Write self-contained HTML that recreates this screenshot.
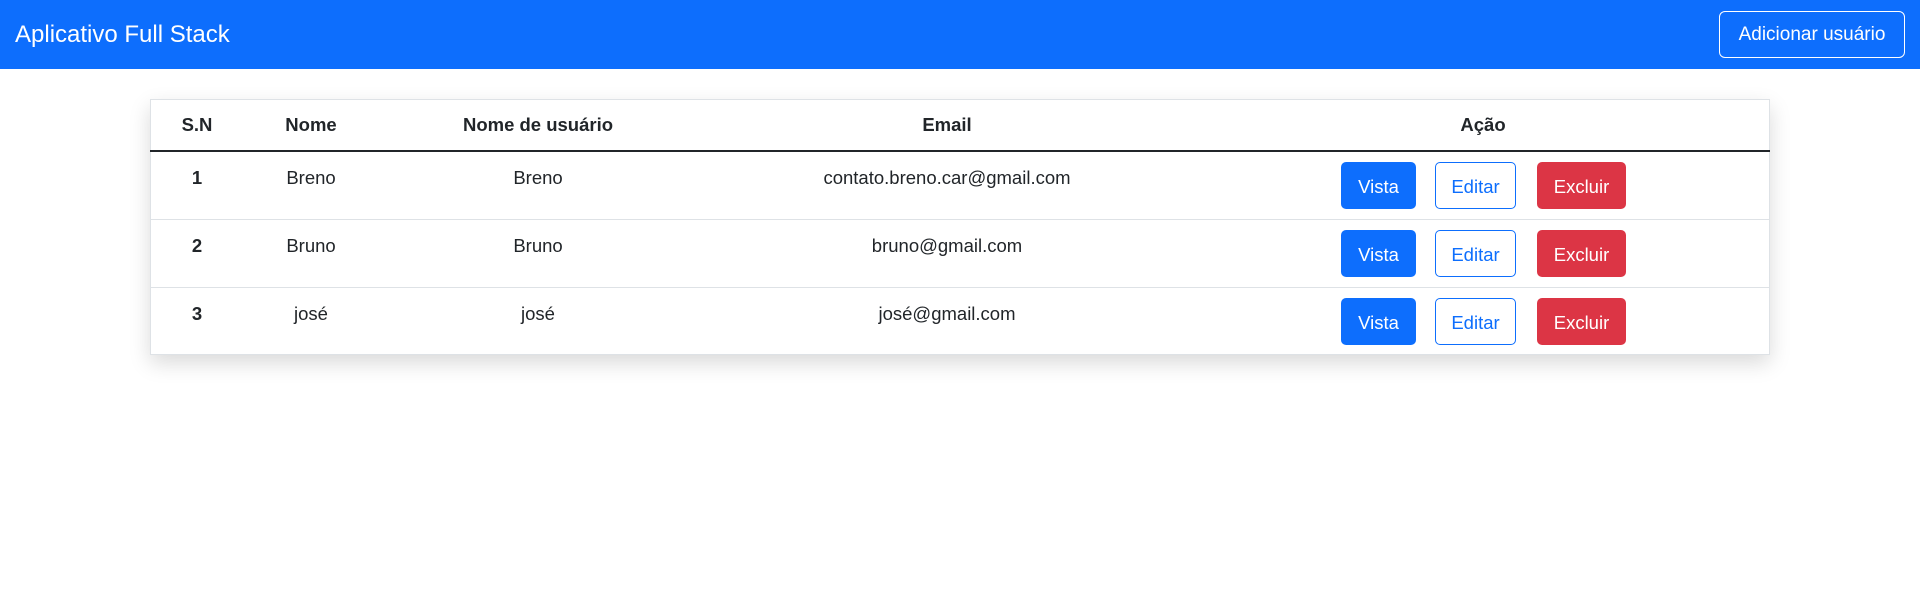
<!DOCTYPE html>
<html><head><meta charset="utf-8"><style>
*{margin:0;padding:0;box-sizing:border-box}
body{width:1920px;height:592px;background:#fff;font-family:"Liberation Sans","DejaVu Sans",sans-serif;color:#212529;position:relative;overflow:hidden}
.nav{position:absolute;left:0;top:0;width:1920px;height:69px;background:#0d6efd}
.title{position:absolute;left:15px;top:0;line-height:69px;font-size:24px;color:#fff}
.add{position:absolute;left:1719px;top:11px;width:186px;height:47px;border:1px solid #fff;border-radius:6px;color:#fff;font-size:19px;line-height:45px;text-align:center}
.tbl{position:absolute;left:150px;top:99px;width:1620px;height:256px;border:1px solid #dee2e6;box-shadow:0 8px 20px rgba(0,0,0,.15);background:#fff}
.c{position:absolute;font-size:18.5px;transform:translateX(-50%);white-space:nowrap;line-height:24px}
.b{font-weight:bold}
.hl{position:absolute;left:150px;width:1620px;height:2px;background:#212529;top:150px}
.rl{position:absolute;left:150px;width:1620px;height:1px;background:#dee2e6}
.btn{position:absolute;height:47px;border-radius:5px;font-size:18.5px;line-height:49px;text-align:center}
.v{background:#0d6efd;color:#fff;width:75px;left:1341px}
.e{border:1px solid #0d6efd;color:#0d6efd;width:81px;left:1435px;line-height:47px}
.x{background:#dc3545;color:#fff;width:89px;left:1537px}
</style></head><body>
<div class="nav"><div class="title">Aplicativo Full Stack</div><div class="add">Adicionar usuário</div></div>
<div class="tbl"></div>
<div class="hl"></div>
<div class="rl" style="top:219px"></div>
<div class="rl" style="top:287px"></div>

<div class="c b" style="left:197px;top:113px">S.N</div>
<div class="c b" style="left:311px;top:113px">Nome</div>
<div class="c b" style="left:538px;top:113px">Nome de usuário</div>
<div class="c b" style="left:947px;top:113px">Email</div>
<div class="c b" style="left:1483px;top:113px">Ação</div>

<div class="c b" style="left:197px;top:166px">1</div>
<div class="c" style="left:311px;top:166px">Breno</div>
<div class="c" style="left:538px;top:166px">Breno</div>
<div class="c" style="left:947px;top:166px">contato.breno.car@gmail.com</div>
<div class="btn v" style="top:162px">Vista</div><div class="btn e" style="top:162px">Editar</div><div class="btn x" style="top:162px">Excluir</div>

<div class="c b" style="left:197px;top:234px">2</div>
<div class="c" style="left:311px;top:234px">Bruno</div>
<div class="c" style="left:538px;top:234px">Bruno</div>
<div class="c" style="left:947px;top:234px">bruno@gmail.com</div>
<div class="btn v" style="top:230px">Vista</div><div class="btn e" style="top:230px">Editar</div><div class="btn x" style="top:230px">Excluir</div>

<div class="c b" style="left:197px;top:302px">3</div>
<div class="c" style="left:311px;top:302px">josé</div>
<div class="c" style="left:538px;top:302px">josé</div>
<div class="c" style="left:947px;top:302px">josé@gmail.com</div>
<div class="btn v" style="top:298px">Vista</div><div class="btn e" style="top:298px">Editar</div><div class="btn x" style="top:298px">Excluir</div>
</body></html>
